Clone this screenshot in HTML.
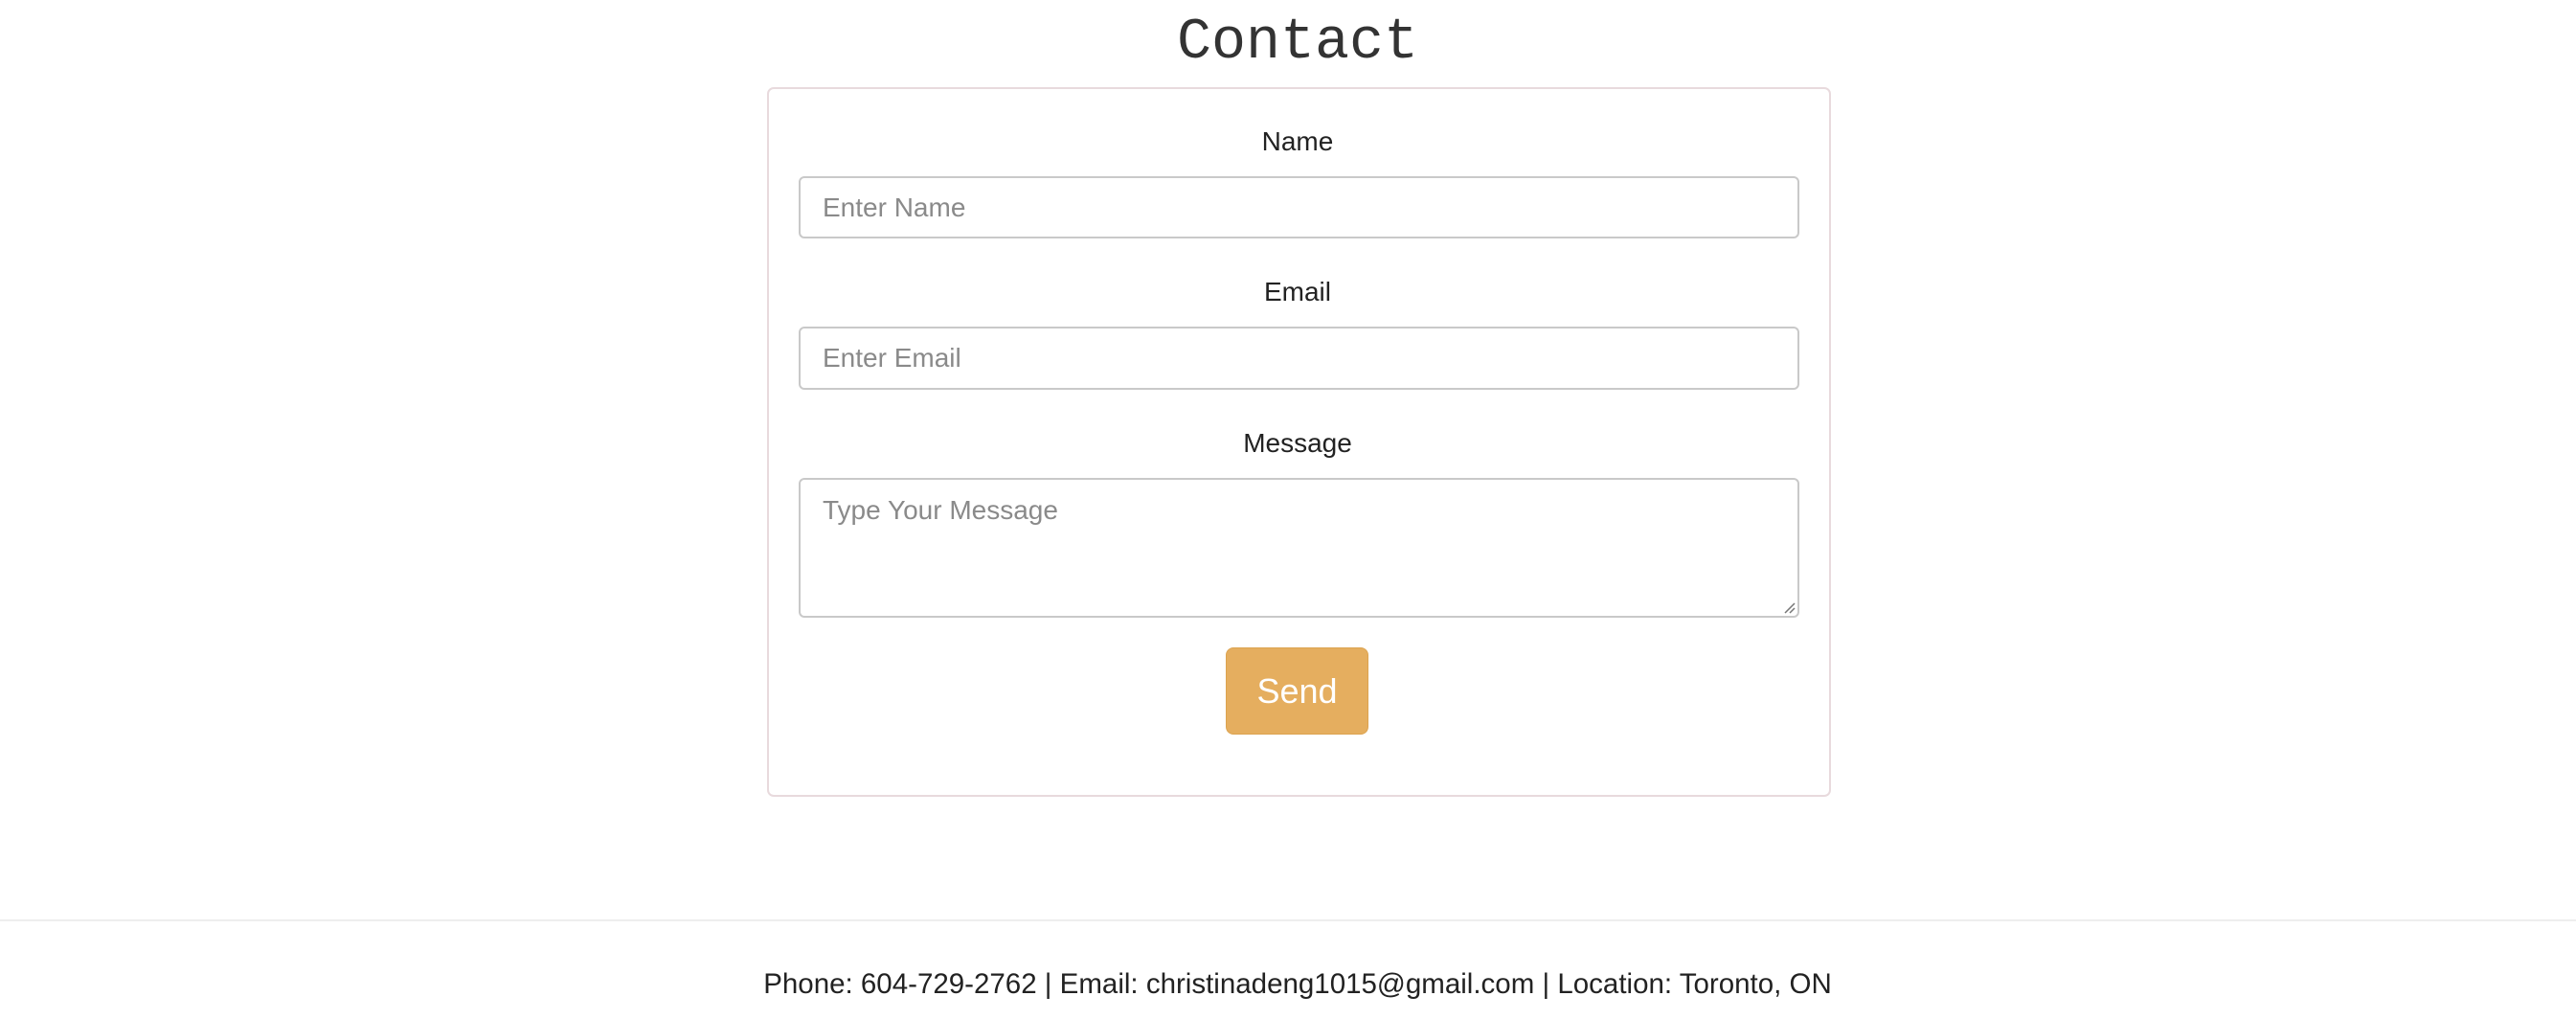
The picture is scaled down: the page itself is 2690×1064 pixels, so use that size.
<!DOCTYPE html>
<html><head><meta charset="utf-8"><style>
html,body{margin:0;padding:0;background:#fff;}
body{width:2690px;height:1064px;position:relative;font-family:"Liberation Sans",sans-serif;color:#222;overflow:hidden;}
h1{position:absolute;left:10px;width:2690px;top:10px;margin:0;text-align:center;font-family:"Liberation Mono",monospace;font-weight:normal;font-size:60px;color:#333;line-height:70px;}
.card{position:absolute;left:801px;top:91px;width:1107px;height:737px;border:2px solid #e8dadd;border-radius:7px;}
.lbl{position:absolute;left:10px;width:2690px;text-align:center;font-size:28px;line-height:32px;color:#222;}
.in{position:absolute;left:834px;border:2px solid #c9c9c9;border-radius:6px;box-sizing:border-box;width:1045px;font-size:28px;color:#8a8a8a;padding-left:23px;}
.btn{position:absolute;left:1280px;top:676px;width:149px;height:91px;background:#e5ae5f;border:1px solid #dca350;border-radius:8px;box-sizing:border-box;color:#fff;font-size:36px;text-align:center;line-height:89px;}
.hr{position:absolute;left:0;top:960px;width:2690px;height:2px;background:#eee;}
.foot{position:absolute;left:10px;width:2690px;top:1011px;text-align:center;font-size:29.5px;line-height:34px;color:#222;}
</style></head><body>
<h1>Contact</h1>
<div class="card"></div>
<div class="lbl" style="top:132px">Name</div>
<div class="in" style="top:184px;height:65px;line-height:61px">Enter Name</div>
<div class="lbl" style="top:289px">Email</div>
<div class="in" style="top:341px;height:66px;line-height:62px">Enter Email</div>
<div class="lbl" style="top:447px">Message</div>
<div class="in" style="top:499px;height:146px;line-height:32px;padding-top:16px">Type Your Message
<svg style="position:absolute;right:2px;bottom:2px" width="14" height="14"><path d="M13 3L3 13M13 8L8 13" stroke="#777" stroke-width="1.5"/></svg></div>
<div class="btn">Send</div>
<div class="hr"></div>
<div class="foot">Phone: 604-729-2762 | Email: christinadeng1015@gmail.com | Location: Toronto, ON</div>
</body></html>
